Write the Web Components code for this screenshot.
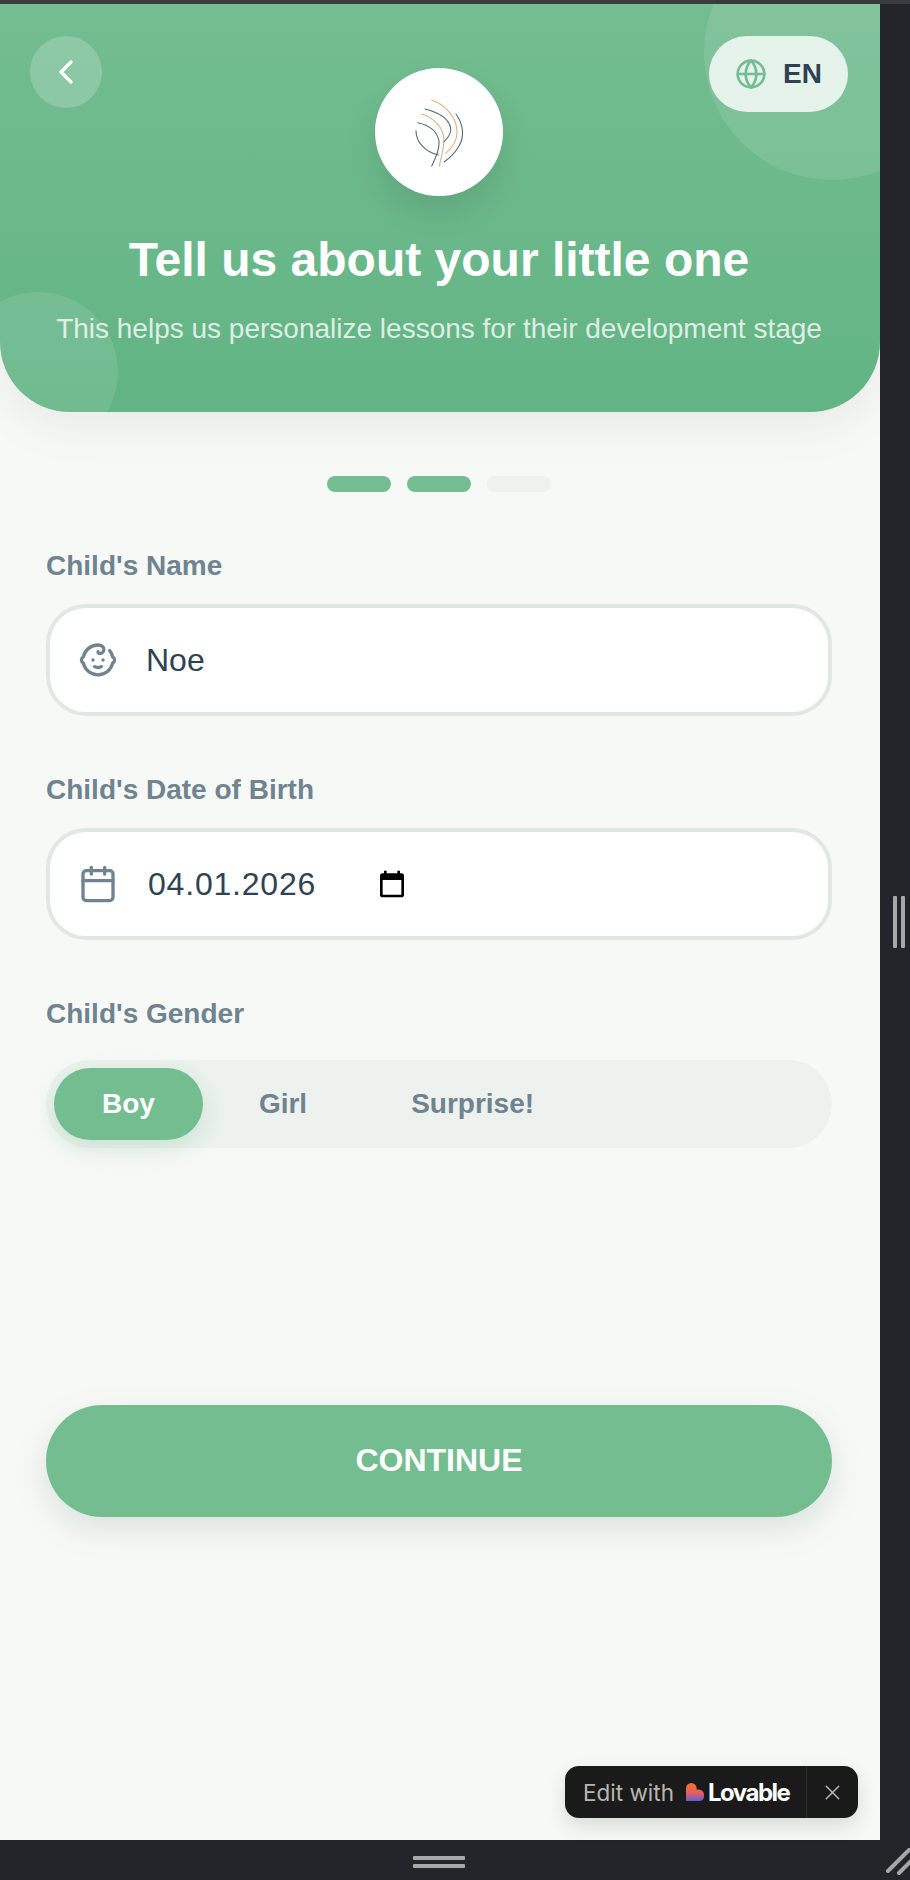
<!DOCTYPE html>
<html lang="en">
<head>
<meta charset="utf-8">
<title>Tell us about your little one</title>
<style>
html, body { margin: 0; height: 100%; }
body { background: #232429; font-family: "Liberation Sans", Arial, sans-serif; overflow: hidden; }
</style>
</head>
<body>
<device-frame>
    <onboard-header title-text="Tell us about your little one" subtitle="This helps us personalize lessons for their development stage"></onboard-header>
    <step-dots steps="3" done="2"></step-dots>
    <form-field label="Child's Name" icon="baby" value="Noe"></form-field>
    <form-field label="Child's Date of Birth" icon="calendar" value="04.01.2026" date></form-field>
    <gender-toggle label="Child's Gender" options="Boy,Girl,Surprise!" selected="Boy"></gender-toggle>
    <cta-button>CONTINUE</cta-button>
    <edit-badge slot="overlay"></edit-badge>
</device-frame>

<script>
const ICONS = {
    baby: '<path d="M9 12h.01"/><path d="M15 12h.01"/><path d="M10 16c.5.3 1.2.5 2 .5s1.5-.2 2-.5"/><path d="M19 6.3a9 9 0 0 1 1.8 3.9 2 2 0 0 1 0 3.6 9 9 0 0 1-17.6 0 2 2 0 0 1 0-3.6A9 9 0 0 1 12 3c2 0 3.5 1.1 3.5 2.5s-.9 2.5-2 2.5c-.8 0-1.5-.4-1.5-1"/>',
    calendar: '<path d="M8 2v4"/><path d="M16 2v4"/><rect width="18" height="18" x="3" y="4" rx="2"/><path d="M3 10h18"/>',
    globe: '<circle cx="12" cy="12" r="10"/><path d="M12 2a14.5 14.5 0 0 0 0 20 14.5 14.5 0 0 0 0-20"/><path d="M2 12h20"/>',
    back: '<path d="m15 18-6-6 6-6"/>',
    close: '<path d="M18 6 6 18"/><path d="m6 6 12 12"/>'
};
const icon = (name, size) => `<svg width="${size}" height="${size}" viewBox="0 0 24 24" fill="none" stroke="currentColor" stroke-width="2" stroke-linecap="round" stroke-linejoin="round">${ICONS[name]}</svg>`;

class DeviceFrame extends HTMLElement {
    constructor() {
        super();
        this.shadow = this.attachShadow({ mode: 'open' });
        this.shadow.innerHTML = `
            <style>
                :host { display: grid; grid-template-columns: 880px 30px; grid-template-rows: 4px 1836px 40px; width: 910px; height: 1880px; background: #232429; position: relative; }
                .top { grid-column: 1 / 3; background: #3a3b3d; }
                .screen { background: #f7f9f6; display: flex; flex-direction: column; overflow: hidden; position: relative; }
                .side { display: flex; justify-content: center; align-items: center; gap: 4px; padding-left: 8px; box-sizing: border-box; }
                .side i { width: 4px; height: 52px; background: #a7a7a7; border-radius: 1px; }
                .bottom { grid-column: 1 / 3; display: flex; flex-direction: column; align-items: center; gap: 4px; padding: 16px 32px 0 0; box-sizing: border-box; }
                .bottom i { width: 52px; height: 4px; background: #a7a7a7; border-radius: 1px; }
                .corner { position: absolute; right: 0; bottom: 0; }
            </style>
            <div class="top"></div>
            <div class="screen"><slot></slot></div>
            <div class="side"><i></i><i></i></div>
            <div class="bottom"><i></i><i></i></div>
            <svg class="corner" width="26" height="32" viewBox="0 0 26 32" fill="none" stroke="#a7a7a7" stroke-width="4" stroke-linecap="round">
                <path d="M4 23 28 -1"/><path d="M15 25 28 12"/>
            </svg>
            <slot name="overlay"></slot>
        `;
    }
}

class OnboardHeader extends HTMLElement {
    constructor() {
        super();
        this.shadow = this.attachShadow({ mode: 'open' });
    }
    connectedCallback() {
        this.shadow.innerHTML = `
            <style>
                :host { display: block; position: relative; flex: none; height: 408px; box-sizing: border-box; overflow: hidden; color: #fff;
                    background: linear-gradient(180deg, #74bd91 0%, #62b485 100%); border-radius: 0 0 70px 70px;
                    padding: 32px 32px 0 30px; box-shadow: 0 16px 48px rgba(0,0,0,.06); }
                .blob { position: absolute; border-radius: 50%; background: rgba(255,255,255,.1); }
                .blob.a { width: 256px; height: 256px; top: -80px; right: -80px; }
                .blob.b { width: 160px; height: 160px; bottom: -40px; left: -42px; }
                .bar { position: relative; display: grid; grid-template-columns: 1fr auto 1fr; align-items: start; }
                .back { justify-self: start; width: 72px; height: 72px; border-radius: 50%; background: rgba(255,255,255,.2); display: flex; align-items: center; justify-content: center; }
                .logo { width: 128px; height: 128px; margin-top: 32px; border-radius: 50%; background: #fff; box-shadow: 0 16px 32px rgba(0,0,0,.1); display: block; }
                .lang { justify-self: end; width: 139px; height: 76px; box-sizing: border-box; border-radius: 38px; background: rgba(255,255,255,.8); display: flex; align-items: center; justify-content: center; gap: 16px; color: #2f4252; font-weight: 700; font-size: 28px; }
                .lang svg { color: #74bd91; }
                h1 { position: relative; margin: 36px -30px 0; text-align: center; font-size: 48px; line-height: 56px; font-weight: 700; }
                p { position: relative; margin: 23px -30px 0; text-align: center; font-size: 28px; line-height: 36px; color: rgba(255,255,255,.8); }
            </style>
            <div class="blob a"></div>
            <div class="blob b"></div>
            <div class="bar">
                <div class="back">${icon('back', 40)}</div>
                <svg class="logo" viewBox="0 0 128 128" fill="none" stroke-width="1.1" stroke-linecap="round">
                    <g stroke="#e3b07f">
                        <path d="M56.7 32C71 37 82 50 82 64C82 73 77 80 70.7 85.3"/>
                        <path d="M46.7 46C60 50 68 60 69 71C69 80 66 90 64.3 98"/>
                    </g>
                    <g stroke="#566b6e">
                        <path d="M50 41C62 44 73 50 75.5 59C77 65 73 70 69 73.7"/>
                        <path d="M42.7 54.7C54 57 62 63 64 73C65 82 60 91 56.7 98"/>
                        <path d="M41 62.7C41 74 50 84 63.3 87"/>
                        <path d="M81 46C88 56 90 68 84 78C80 85 75 90 69.3 93.7"/>
                    </g>
                </svg>
                <div class="lang">${icon('globe', 32)}<span>EN</span></div>
            </div>
            <h1>${this.getAttribute('title-text')}</h1>
            <p>${this.getAttribute('subtitle')}</p>
        `;
    }
}

class StepDots extends HTMLElement {
    constructor() {
        super();
        this.shadow = this.attachShadow({ mode: 'open' });
    }
    connectedCallback() {
        const steps = Number(this.getAttribute('steps')), done = Number(this.getAttribute('done'));
        const dots = [...Array(steps)].map((_, i) => `<i class="${i < done ? 'on' : ''}"></i>`).join('');
        this.shadow.innerHTML = `
            <style>
                :host { display: flex; justify-content: center; gap: 16px; width: 878px; margin-top: 64px; flex: none; }
                i { width: 64px; height: 16px; border-radius: 8px; background: #eef2ee; }
                i.on { background: #74bd91; }
            </style>
            ${dots}
        `;
    }
}

class FormField extends HTMLElement {
    constructor() {
        super();
        this.shadow = this.attachShadow({ mode: 'open' });
    }
    connectedCallback() {
        const isDate = this.hasAttribute('date');
        const picker = `<svg class="picker" width="32" height="32" viewBox="0 0 24 24" fill="#000"><path d="M19 4h-1V2h-2v2H8V2H6v2H5a2 2 0 0 0-2 2v14a2 2 0 0 0 2 2h14a2 2 0 0 0 2-2V6a2 2 0 0 0-2-2Zm0 16H5V9h14v11Z"/></svg>`;
        this.shadow.innerHTML = `
            <style>
                :host { display: block; flex: none; margin: 56px 48px 0 46px; }
                label { display: block; font-size: 28px; line-height: 35px; font-weight: 700; color: #6f8391; margin-bottom: 21px; }
                .box { height: 112px; box-sizing: border-box; border: 4px solid #e0e8e4; border-radius: 40px; background: #fff; display: flex; align-items: center; padding-left: 28px; color: #2f4252; font-size: 32px; }
                .box svg:first-child { color: #6f8391; flex: none; }
                .val { margin-left: 28px; margin-top: 1px; }
                .val.date { margin-left: 30px; letter-spacing: .8px; margin-top: 0; }
                .picker { margin-left: 60px; margin-top: -1px; }
            </style>
            <label>${this.getAttribute('label')}</label>
            <div class="box">
                ${icon(this.getAttribute('icon'), 40)}
                <span class="val ${isDate ? 'date' : ''}">${this.getAttribute('value')}</span>
                ${isDate ? picker : ''}
            </div>
        `;
    }
}

class GenderToggle extends HTMLElement {
    constructor() {
        super();
        this.shadow = this.attachShadow({ mode: 'open' });
    }
    connectedCallback() {
        const selected = this.getAttribute('selected');
        const opts = this.getAttribute('options').split(',')
            .map((o) => `<span class="${o === selected ? 'on' : ''}">${o}</span>`).join('');
        this.shadow.innerHTML = `
            <style>
                :host { display: block; flex: none; margin: 56px 48px 0 46px; }
                label { display: block; font-size: 28px; line-height: 35px; font-weight: 700; color: #6f8391; margin-bottom: 29px; }
                .track { height: 88px; box-sizing: border-box; border-radius: 44px; background: #edf2ee; padding: 8px; display: flex; gap: 8px; }
                span { height: 72px; line-height: 72px; padding: 0 48px; border-radius: 36px; font-size: 28px; font-weight: 700; color: #6f8391; }
                span.on { background: #74bd91; color: #fff; box-shadow: 0 8px 24px rgba(116,189,145,.3); }
            </style>
            <label>${this.getAttribute('label')}</label>
            <div class="track">${opts}</div>
        `;
    }
}

class CtaButton extends HTMLElement {
    constructor() {
        super();
        this.shadow = this.attachShadow({ mode: 'open' });
        this.shadow.innerHTML = `
            <style>
                :host { display: flex; flex: none; align-items: center; justify-content: center; height: 112px; box-sizing: border-box; padding-bottom: 2px; margin: 257px 48px 0 46px; border-radius: 56px;
                    background: #74bd91; color: #fff; font-size: 32px; font-weight: 700; box-shadow: 0 12px 32px rgba(90,130,110,.18); }
            </style>
            <slot></slot>
        `;
    }
}

class EditBadge extends HTMLElement {
    constructor() {
        super();
        this.shadow = this.attachShadow({ mode: 'open' });
        this.shadow.innerHTML = `
            <style>
                :host { position: absolute; left: 565px; top: 1766px; width: 293px; height: 52px; box-sizing: border-box; display: flex; align-items: center; background: #1a1a1a; border-radius: 14px; box-shadow: 0 8px 20px rgba(0,0,0,.12); font-family: Inter, sans-serif; color: #b8b6b0; }
                .edit { font-size: 22.5px; margin-left: 18px; }
                svg.heart { margin-left: 12px; flex: none; }
                .brand { color: #fff; font-weight: 700; font-size: 24px; letter-spacing: -1.5px; margin-left: 4px; }
                .close { position: absolute; right: 0; top: 0; bottom: 0; width: 51px; border-left: 1px solid #2a2a2a; display: flex; align-items: center; justify-content: center; }
                .close svg { stroke-width: 1.4; }
            </style>
            <span class="edit">Edit with</span>
            <svg class="heart" width="18" height="18" viewBox="0 0 18 18">
                <defs><linearGradient id="h" x1="0" y1="0" x2="0" y2="1">
                    <stop offset="0" stop-color="#f5742c"/><stop offset=".55" stop-color="#ea5a5e"/><stop offset="1" stop-color="#5a62d8"/>
                </linearGradient></defs>
                <path fill="url(#h)" d="M5.3 0A5.3 5.3 0 0 1 10.6 5.3V6.5H12.7A5.3 5.3 0 0 1 18 11.8V13.5A4.5 4.5 0 0 1 13.5 18H0V5.3A5.3 5.3 0 0 1 5.3 0Z"/>
            </svg>
            <span class="brand">Lovable</span>
            <span class="close">${icon('close', 25)}</span>
        `;
    }
}

customElements.define('device-frame', DeviceFrame);
customElements.define('onboard-header', OnboardHeader);
customElements.define('step-dots', StepDots);
customElements.define('form-field', FormField);
customElements.define('gender-toggle', GenderToggle);
customElements.define('cta-button', CtaButton);
customElements.define('edit-badge', EditBadge);
</script>
</body>
</html>
